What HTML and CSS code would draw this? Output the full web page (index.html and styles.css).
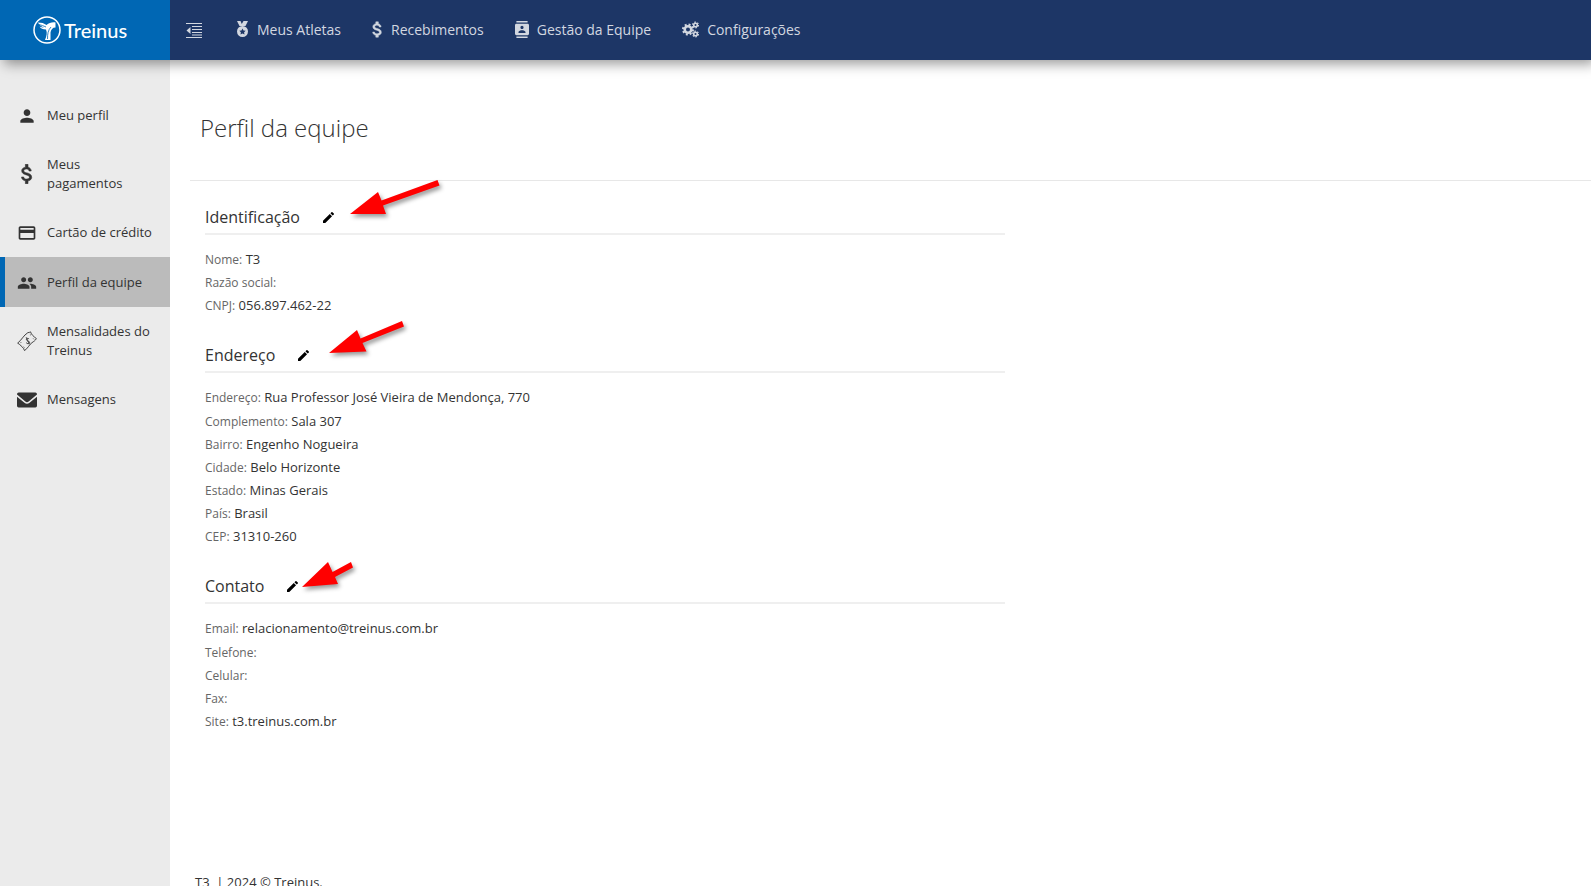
FILE: index.html
```html
<!DOCTYPE html>
<html lang="pt-BR">
<head>
    <meta charset="UTF-8">
    <meta name="viewport" content="width=device-width, initial-scale=1.0">
    <title>Treinus - Perfil da equipe</title>
    <link rel="stylesheet" href="styles.css">
</head>
<body>

<header class="topbar">
    <a class="logo" href="#">
        <svg width="28" height="28" viewBox="0 0 28 28" aria-hidden="true">
            <circle cx="14" cy="14" r="13" fill="none" stroke="#fff" stroke-width="1.5"/>
            <path d="M5 6.500c3.500 0 6 .8 8.500 2.500 2.500-2 5.500-3 9-2.500v5c-3 0-4.500 2-5 5V24h-5.500c1.500-4 2.500-7 1-10.500-3 0-5.500-1-6.500-3 1.500.8 3 1 4.500 1-2.500-1-5-2.500-6-5z" fill="#fff"/>
            <path d="M5.500 8.500c3 .5 5 1.500 7.500 2.500M14.500 23c0-5 .5-9 3.500-12" fill="none" stroke="#0067b4" stroke-width=".8"/>
        </svg>
        <span>Treinus</span>
    </a>
    <button class="menu-toggle" type="button" aria-label="Recolher menu">
        <svg width="16" height="16" viewBox="0 0 16 16" aria-hidden="true">
            <path d="M0 1.500h16M6 4.500h10M6 7.500h10M6 10.500h10M6 13h10M0 15.500h16" stroke="currentColor" stroke-width="1.200"/>
            <path d="M4.500 5v7L.5 8.500z" fill="currentColor"/>
        </svg>
    </button>
    <nav class="main-nav">
        <a href="#">
            <svg width="13" height="17" viewBox="0 0 13 17" fill="currentColor" aria-hidden="true">
                <path d="M1 0h3.500l1.300 3L7.500 0H12L9.500 5h-6z"/>
                <path fill-rule="evenodd" d="M6.500 5a5.500 5.500 0 1 1 0 11 5.500 5.500 0 0 1 0-11zm0 2.500l-1 2-2.200.3 1.600 1.500-.4 2.200 2-1 2 1-.4-2.200 1.600-1.500-2.200-.3z"/>
            </svg>
            <span>Meus Atletas</span>
        </a>
        <a href="#">
            <svg width="11" height="17" viewBox="6 2 12 20" fill="currentColor" stroke="currentColor" stroke-width=".6" aria-hidden="true">
                <path d="M11.800 10.900c-2.270-.59-3-1.200-3-2.150 0-1.090 1.010-1.850 2.700-1.850 1.780 0 2.440.85 2.500 2.100h2.210c-.07-1.720-1.120-3.300-3.210-3.810V3h-3v2.160c-1.940.42-3.500 1.680-3.500 3.610 0 2.310 1.910 3.460 4.700 4.130 2.500.6 3 1.480 3 2.410 0 .69-.49 1.790-2.700 1.790-2.060 0-2.870-.92-2.980-2.100h-2.200c.12 2.190 1.760 3.420 3.680 3.830V21h3v-2.150c1.950-.37 3.500-1.500 3.500-3.550 0-2.840-2.430-3.810-4.700-4.400z"/>
            </svg>
            <span>Recebimentos</span>
        </a>
        <a href="#">
            <svg width="14" height="17" viewBox="2 0 20 24" preserveAspectRatio="none" fill="currentColor" aria-hidden="true">
                <path d="M20 0H4v2h16V0zM4 24h16v-2H4v2zM20 4H4c-1.100 0-2 .9-2 2v12c0 1.100.9 2 2 2h16c1.100 0 2-.9 2-2V6c0-1.100-.9-2-2-2zm-8 2.750c1.240 0 2.250 1.010 2.250 2.250s-1.010 2.250-2.250 2.250S9.750 10.240 9.750 9 10.760 6.750 12 6.750zM17 17H7v-1.500c0-1.670 3.330-2.500 5-2.500s5 .83 5 2.500V17z"/>
            </svg>
            <span>Gestão da Equipe</span>
        </a>
        <a href="#">
            <svg width="17" height="17" viewBox="0 0 17 17" fill="none" stroke="currentColor" aria-hidden="true">
                <circle cx="6" cy="8.500" r="3.300" stroke-width="2.600"/>
                <circle cx="6" cy="8.500" r="5" stroke-width="2" stroke-dasharray="1.960 1.960"/>
                <circle cx="13.500" cy="4" r="1.800" stroke-width="1.600"/>
                <circle cx="13.500" cy="4" r="2.900" stroke-width="1.200" stroke-dasharray="1.520 1.520"/>
                <circle cx="13.500" cy="13" r="1.800" stroke-width="1.600"/>
                <circle cx="13.500" cy="13" r="2.900" stroke-width="1.200" stroke-dasharray="1.520 1.520"/>
            </svg>
            <span>Configurações</span>
        </a>
    </nav>
</header>

<div class="layout">
    <!-- Side menu -->
    <aside class="sidebar">
        <a href="#">
            <svg viewBox="0 0 24 24" aria-hidden="true"><path d="M12 12c2.210 0 4-1.790 4-4s-1.790-4-4-4-4 1.790-4 4 1.790 4 4 4zm0 2c-2.670 0-8 1.340-8 4v2h16v-2c0-2.660-5.330-4-8-4z"/></svg>
            <span>Meu perfil</span>
        </a>
        <a href="#">
            <svg viewBox="2 2 20 20" aria-hidden="true"><path stroke="#333" stroke-width=".6" d="M11.800 10.900c-2.270-.59-3-1.200-3-2.150 0-1.090 1.010-1.850 2.700-1.850 1.780 0 2.440.85 2.500 2.100h2.210c-.07-1.720-1.120-3.300-3.210-3.810V2.300h-2.600v2.860c-2.140.42-3.700 1.680-3.700 3.610 0 2.310 1.910 3.460 4.700 4.130 2.500.6 3 1.480 3 2.410 0 .69-.49 1.790-2.700 1.790-2.060 0-2.870-.92-2.980-2.100h-2.200c.12 2.190 1.760 3.420 3.880 3.830v2.870h2.600v-2.850c2.150-.37 3.700-1.500 3.700-3.550 0-2.840-2.430-3.810-4.700-4.400z"/></svg>
            <span>Meus pagamentos</span>
        </a>
        <a href="#">
            <svg viewBox="0 0 24 24" aria-hidden="true"><path d="M20 4H4c-1.110 0-1.990.89-1.990 2L2 18c0 1.110.89 2 2 2h16c1.110 0 2-.89 2-2V6c0-1.110-.89-2-2-2zm0 14H4v-6h16v6zm0-10H4V6h16v2z"/></svg>
            <span>Cartão de crédito</span>
        </a>
        <a class="active" href="#">
            <svg viewBox="0 0 24 24" aria-hidden="true"><path d="M16 11c1.660 0 2.990-1.340 2.990-3S17.660 5 16 5c-1.660 0-3 1.340-3 3s1.340 3 3 3zm-8 0c1.660 0 2.990-1.340 2.990-3S9.660 5 8 5C6.340 5 5 6.340 5 8s1.340 3 3 3zm0 2c-2.330 0-7 1.170-7 3.500V19h14v-2.500c0-2.330-4.670-3.500-7-3.500zm8 0c-.29 0-.62.020-.97.050 1.160.84 1.970 1.970 1.970 3.450V19h6v-2.500c0-2.330-4.670-3.500-7-3.500z"/></svg>
            <span>Perfil da equipe</span>
        </a>
        <a href="#">
            <svg viewBox="0 0 24 24" aria-hidden="true">
                <path d="M.8 14.500C5 11.500 8 5 13 2c1.500 0 2.500-.6 3.200-1 1.200 3.500 3.600 5.500 7 8-1 2.500-3.200 3.500-5.200 5-3.500 2.500-5 7-9 9.500-.5-3-5.200-7-8.200-9z" fill="none" stroke="#333" stroke-width="1.100"/>
                <path d="M14.500 9.500c-1.800-1.500-4-.2-3 1.500s3.800 1 3.600 2.800-2.800 2-4.100.2M11 7.500l4 8.500" fill="none" stroke="#333" stroke-width="1.100"/>
                <path d="M5 13.500l-1 1M19.500 9l1 1M15.500 4l1 1M8 19l1 1" stroke="#333"/>
            </svg>
            <span>Mensalidades do Treinus</span>
        </a>
        <a href="#">
            <svg viewBox="0 0 24 24" aria-hidden="true"><path d="M2 3h20a2 2 0 0 1 2 2v.5l-10 8.300a3 3 0 0 1-4 0L0 5.500V5a2 2 0 0 1 2-2zM0 8l9 7.400a5 5 0 0 0 6 0L24 8v11a2 2 0 0 1-2 2H2a2 2 0 0 1-2-2z"/></svg>
            <span>Mensagens</span>
        </a>
    </aside>

    <main class="content">
        <h1>Perfil da equipe</h1>

        <div class="profile">
            <section>
                <div class="section-title">
                    <h2>Identificação</h2>
                    <button type="button" aria-label="Editar identificação">
                        <svg viewBox="3 3 18 18" aria-hidden="true"><path d="M3 17.250V21h3.750L17.810 9.940l-3.750-3.750L3 17.250zM20.710 7.040c.39-.39.39-1.020 0-1.410l-2.340-2.340c-.39-.39-1.020-.39-1.410 0l-1.830 1.830 3.750 3.750 1.830-1.830z"/></svg>
                    </button>
                    <svg class="arrow arrow-long" width="100" height="44" viewBox="0 0 100 44" aria-hidden="true"><path d="M4 37L32 15l3.500 8.500L91.500 3l2 5.500L37 28.500 40 37z"/></svg>
                </div>
                <dl>
                    <div><dt>Nome:</dt> <dd>T3</dd></div>
                    <div><dt>Razão social:</dt> <dd></dd></div>
                    <div><dt>CNPJ:</dt> <dd>056.897.462-22</dd></div>
                </dl>
            </section>

            <section>
                <div class="section-title">
                    <h2>Endereço</h2>
                    <button type="button" aria-label="Editar endereço">
                        <svg viewBox="3 3 18 18" aria-hidden="true"><path d="M3 17.250V21h3.750L17.810 9.940l-3.750-3.750L3 17.250zM20.710 7.040c.39-.39.39-1.020 0-1.410l-2.340-2.340c-.39-.39-1.020-.39-1.410 0l-1.830 1.830 3.750 3.750 1.830-1.830z"/></svg>
                    </button>
                    <svg class="arrow arrow-medium" width="90" height="44" viewBox="0 0 90 44" aria-hidden="true"><path d="M4 38l28-23 3.500 8.500L77 6l2 5.500L37.500 28l4 8.500z"/></svg>
                </div>
                <dl>
                    <div><dt>Endereço:</dt> <dd>Rua Professor José Vieira de Mendonça, 770</dd></div>
                    <div><dt>Complemento:</dt> <dd>Sala 307</dd></div>
                    <div><dt>Bairro:</dt> <dd>Engenho Nogueira</dd></div>
                    <div><dt>Cidade:</dt> <dd>Belo Horizonte</dd></div>
                    <div><dt>Estado:</dt> <dd>Minas Gerais</dd></div>
                    <div><dt>País:</dt> <dd>Brasil</dd></div>
                    <div><dt>CEP:</dt> <dd>31310-260</dd></div>
                </dl>
            </section>

            <section>
                <div class="section-title">
                    <h2>Contato</h2>
                    <button type="button" aria-label="Editar contato">
                        <svg viewBox="3 3 18 18" aria-hidden="true"><path d="M3 17.250V21h3.750L17.810 9.940l-3.750-3.750L3 17.250zM20.710 7.040c.39-.39.39-1.020 0-1.410l-2.340-2.340c-.39-.39-1.020-.39-1.410 0l-1.830 1.830 3.750 3.750 1.830-1.830z"/></svg>
                    </button>
                    <svg class="arrow arrow-short" width="64" height="44" viewBox="0 0 64 44" aria-hidden="true"><path d="M4 37l26-25 4.500 10L53 12l2 5.500L37 27l3 7z"/></svg>
                </div>
                <dl>
                    <div><dt>Email:</dt> <dd>relacionamento@treinus.com.br</dd></div>
                    <div><dt>Telefone:</dt> <dd></dd></div>
                    <div><dt>Celular:</dt> <dd></dd></div>
                    <div><dt>Fax:</dt> <dd></dd></div>
                    <div><dt>Site:</dt> <dd>t3.treinus.com.br</dd></div>
                </dl>
            </section>
        </div>

        <footer>T3 &nbsp;| 2024 © Treinus.</footer>
    </main>
</div>

</body>
</html>
```
FILE: styles.css
```css
* {
    box-sizing: border-box;
}
body {
    margin: 0;
    font-family: "Open Sans", "Noto Sans", sans-serif;
    font-size: 13px;
    color: #333;
    background-color: #fff;
    height: 100vh;
    overflow: hidden;
}
a {
    color: inherit;
    text-decoration: none;
}
button {
    padding: 0;
    border: none;
    background: none;
    cursor: pointer;
}
svg {
    display: block;
    flex-shrink: 0;
}

/* Top bar */
.topbar {
    position: relative;
    z-index: 1;
    display: flex;
    align-items: center;
    height: 60px;
    background-color: #1d3666;
    color: #d2d7e0;
    box-shadow: 4px 4px 12px rgba(0,0,0,0.4);
}
.logo {
    display: flex;
    align-items: center;
    gap: 3px;
    width: 170px;
    height: 60px;
    padding-left: 33px;
    background-color: #0067b4;
    color: #fff;
    font-family: Lato, sans-serif;
    font-size: 20px;
    font-weight: 500;
}
.menu-toggle {
    margin: 0 34px 0 16px;
    color: inherit;
}
.main-nav {
    display: flex;
    gap: 31px;
    padding-bottom: 2px;
    font-size: 14px;
    font-weight: 500;
}
.main-nav a {
    display: flex;
    align-items: center;
    gap: 8px;
}

/* Side menu */
.layout {
    display: flex;
    min-height: calc(100vh - 60px);
}
.sidebar {
    flex: 0 0 170px;
    padding-top: 30px;
    background-color: #ebebeb;
}
.sidebar a {
    display: flex;
    align-items: center;
    gap: 10px;
    min-height: 50px;
    padding: 15px 12px 14px;
    border-left: 5px solid transparent;
    line-height: 19px;
}
.sidebar a.active {
    background-color: #bbb;
    border-left-color: #0067b4;
}
.sidebar svg {
    width: 20px;
    height: 20px;
    fill: #333;
}

/* Content */
.content {
    flex: 1;
    padding: 0 0 0 20px;
}
h1 {
    margin: 0 0 24px;
    padding: 50px 10px 34px;
    border-bottom: 1px solid #e7e7e7;
    font-size: 24px;
    font-weight: 300;
    line-height: 36px;
}
.profile {
    max-width: 815px;
    padding-left: 15px;
}
section {
    margin-bottom: 26px;
}
.section-title {
    position: relative;
    display: flex;
    align-items: center;
    gap: 23px;
    height: 30px;
    padding-bottom: 4px;
    border-bottom: 2px solid #efefef;
}
h2 {
    margin: 0;
    font-size: 16px;
    font-weight: 400;
    line-height: 24px;
}
.section-title button svg {
    width: 11px;
    height: 11px;
    fill: #000;
}
.arrow {
    position: absolute;
    bottom: 12px;
    fill: #f00;
    filter: drop-shadow(2px 3px 2px rgba(0,0,0,0.4));
}
.arrow-long {
    left: 141px;
}
.arrow-medium {
    left: 120px;
}
.arrow-short {
    left: 93px;
    bottom: 8px;
}
dl {
    margin: 0;
    padding-top: 13px;
    line-height: 23px;
}
section + section dl div:first-child {
    padding-bottom: 1px;
}
dt, dd {
    display: inline;
    margin: 0;
}
dt {
    font-size: 12px;
    color: #666;
}
footer {
    padding: 113px 5px 0;
    line-height: 20px;
}
```
